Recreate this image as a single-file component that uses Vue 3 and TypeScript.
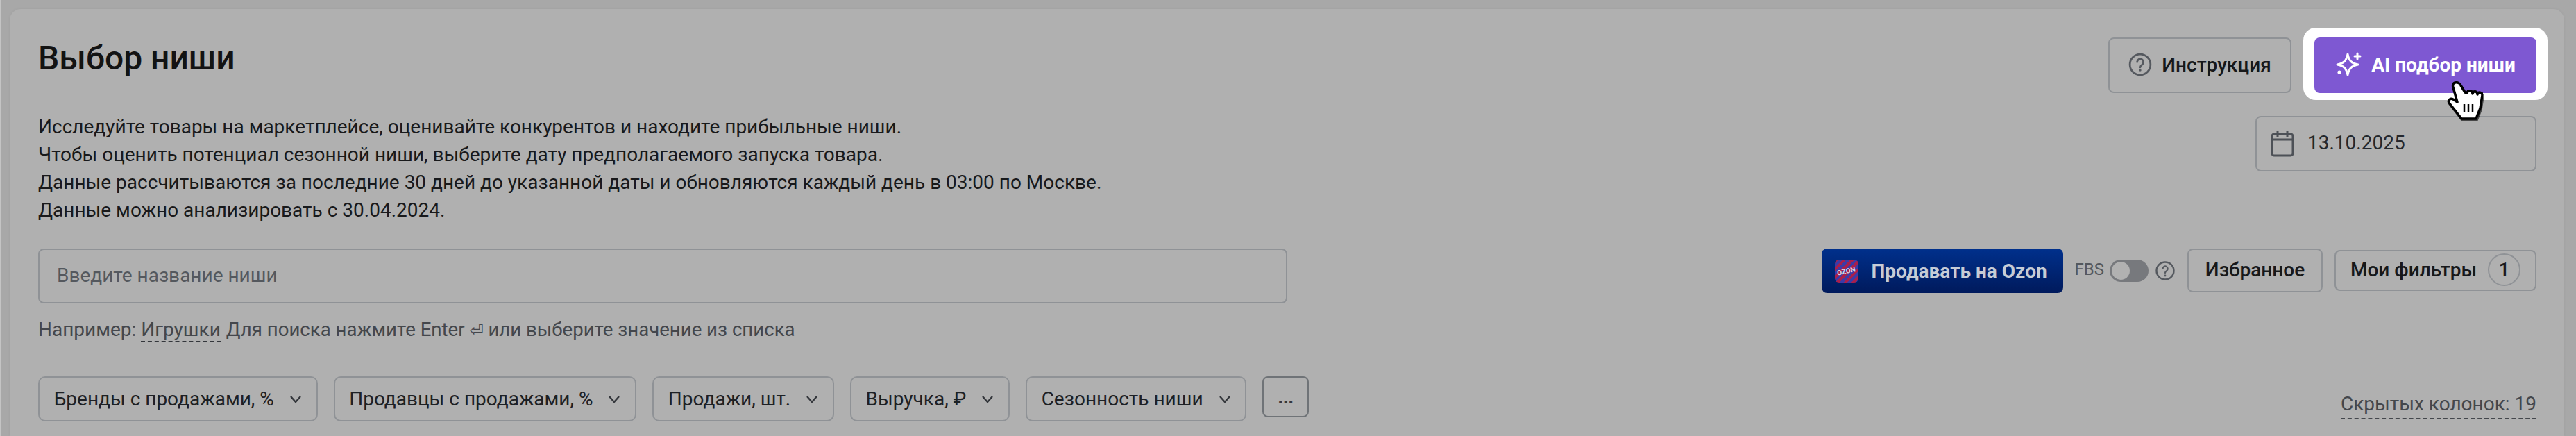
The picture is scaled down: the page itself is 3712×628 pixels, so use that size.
<template>
  <div class="page">
    <div class="card">
      <section class="top">
        <div class="intro">
          <h1>Выбор ниши</h1>
          <p v-for="line in introLines" :key="line">{{ line }}</p>
        </div>
        <div class="top-side">
          <div class="top-actions">
            <button class="btn help-btn">
              <svg class="help-icon" viewBox="0 0 32 32" fill="none">
                <circle cx="16" cy="16" r="14" stroke="#55595f" stroke-width="2.6" />
                <path d="M11.8 12.6a4.3 4.3 0 1 1 6.6 3.7c-1.5 1-2.4 1.7-2.4 3.4" stroke="#55595f" stroke-width="2.6" stroke-linecap="round" />
                <circle cx="16" cy="23.6" r="1.6" fill="#55595f" />
              </svg>
              Инструкция
            </button>
            <div class="ai-halo">
              <button class="ai-btn">
                <svg class="spark" viewBox="0 0 38 38" fill="none">
                  <path d="M18 4c1.800 9.500 5.500 13.200 15 15-9.500 1.800-13.200 5.500-15 15-1.800-9.500-5.500-13.200-15-15 9.500-1.800 13.200-5.500 15-15Z" stroke="#fff" stroke-width="3" stroke-linejoin="round" />
                  <path d="M32 3v8M28 7h8" stroke="#fff" stroke-width="3" stroke-linecap="round" />
                  <circle cx="6" cy="30" r="2.600" fill="#fff" />
                </svg>
                AI подбор ниши
              </button>
              <svg class="cursor" viewBox="0 0 52 58">
                <path d="M12 2C9 2 8 6 9 9l6 21-6-4c-4-2-8 1-6 5l15 19 3 4h21l6-15 3-19c0-5-6-5-7-1 0-5-6-6-7-1 0-5-7-6-8-1l-3-1-6-10c-1-3-5-5-8-4Z" fill="#fff" stroke="#000" stroke-width="3.500" stroke-linejoin="round" />
                <path d="M25 33v11M31 33v11M37 33v11" stroke="#000" stroke-width="2.500" />
              </svg>
            </div>
          </div>
          <div class="date-field">
            <svg class="cal" viewBox="0 0 34 40" fill="none">
              <rect x="2" y="7" width="30" height="31" rx="3" stroke="#4d5157" stroke-width="3" />
              <path d="M2 15h30M10 2v9M24 2v9" stroke="#4d5157" stroke-width="3" />
            </svg>
            <span>13.10.2025</span>
          </div>
        </div>
      </section>

      <section class="middle">
        <div class="search">
          <div class="search-input">Введите название ниши</div>
          <div class="hint">
            Например: <span class="dashed">Игрушки</span>
            <span class="hint-rest">Для поиска нажмите Enter <i>⏎</i> или выберите значение из списка</span>
          </div>
        </div>
        <div class="tools">
          <button class="ozon-btn">
            <span class="ozon-logo"><span>OZON</span></span>
            Продавать на Ozon
          </button>
          <span class="fbs">FBS</span>
          <span class="toggle"><span class="knob"></span></span>
          <svg class="fbs-help" viewBox="0 0 28 32" fill="none">
            <circle cx="14" cy="16" r="12.500" stroke="#54585e" stroke-width="2.400" />
            <path d="M10.500 13a3.600 3.600 0 1 1 5.500 3.100c-1.300.8-2 1.400-2 2.900" stroke="#54585e" stroke-width="2.200" stroke-linecap="round" />
            <circle cx="14" cy="23" r="1.400" fill="#54585e" />
          </svg>
          <button class="btn fav-btn">Избранное</button>
          <button class="btn my-btn">Мои фильтры <span class="badge">1</span></button>
        </div>
      </section>

      <section class="bottom">
        <div class="filters">
          <button v-for="f in filters" :key="f" class="chip">
            {{ f }}
            <svg viewBox="0 0 18 12" fill="none"><path d="M2 2l7 8 7-8" stroke="#33363b" stroke-width="2.400" /></svg>
          </button>
          <button class="more">...</button>
        </div>
        <span class="hidden-cols">Скрытых колонок: 19</span>
      </section>
    </div>
  </div>
</template>

<script setup lang="ts">
const introLines: string[] = [
  'Исследуйте товары на маркетплейсе, оценивайте конкурентов и находите прибыльные ниши.',
  'Чтобы оценить потенциал сезонной ниши, выберите дату предполагаемого запуска товара.',
  'Данные рассчитываются за последние 30 дней до указанной даты и обновляются каждый день в 03:00 по Москве.',
  'Данные можно анализировать с 30.04.2024.'
]

const filters: string[] = [
  'Бренды с продажами, %',
  'Продавцы с продажами, %',
  'Продажи, шт.',
  'Выручка, ₽',
  'Сезонность ниши'
]
</script>

<style>
html,
body {
  margin: 0;
  background: #a8a8a8;
}
</style>

<style scoped>
.page {
  width: 3712px;
  height: 628px;
  padding: 13px 17px 0 12px;
  box-sizing: border-box;
  overflow: hidden;
  border-left: 2px solid #c4c4c4;
  font-family: Roboto, "Liberation Sans", sans-serif;
  color: #1b1c1e;
}

.card {
  height: 615px;
  box-sizing: border-box;
  padding: 41px 40px 0 41px;
  background: #b0b0b0;
  border-radius: 16px 16px 0 0;
  box-shadow: 0 0 4px rgba(0, 0, 0, 0.06);
}

.top {
  display: flex;
  justify-content: space-between;
  height: 304px;
}

h1 {
  margin: 4px 0 53px;
  font-size: 48px;
  line-height: 52px;
  font-weight: 500;
  color: #131313;
}

.intro p {
  margin: 0;
  font-size: 28px;
  line-height: 40px;
  color: #18191b;
}

.top-side {
  display: flex;
  flex-direction: column;
  align-items: flex-end;
  gap: 33px;
}

.top-actions {
  display: flex;
  align-items: center;
  gap: 33px;
}

button {
  font-family: inherit;
  cursor: pointer;
}

.btn {
  display: flex;
  align-items: center;
  justify-content: center;
  box-sizing: border-box;
  padding: 0 0 2px;
  background: transparent;
  border: 2px solid #8f9296;
  border-radius: 8px;
  font-size: 28px;
  font-weight: 500;
  color: #17181a;
}

.help-btn {
  width: 264px;
  height: 80px;
  gap: 14px;
}

.help-icon {
  width: 34px;
  height: 34px;
}

.ai-halo {
  position: relative;
  padding: 14px 16px 10px;
  margin: -14px -16px -10px;
  background: #fff;
  border-radius: 18px;
}

.ai-btn {
  display: flex;
  align-items: center;
  justify-content: center;
  gap: 14px;
  width: 320px;
  height: 80px;
  padding: 0 0 2px;
  background: #7e58d2;
  border: none;
  border-radius: 8px;
  color: #fff;
  font-size: 28px;
  font-weight: 700;
}

.spark {
  width: 38px;
  height: 38px;
}

.cursor {
  position: absolute;
  left: 207px;
  top: 77px;
  width: 52px;
  height: 58px;
  z-index: 2;
  filter: drop-shadow(1px 2px 0 rgba(0, 0, 0, 0.6));
}

.date-field {
  display: flex;
  align-items: center;
  gap: 19px;
  box-sizing: border-box;
  width: 405px;
  height: 80px;
  padding: 0 0 3px 20px;
  border: 2px solid #8f9296;
  border-radius: 8px;
  font-size: 28px;
  color: #24272c;
}

.cal {
  width: 34px;
  height: 40px;
}

.middle {
  display: flex;
  justify-content: space-between;
  height: 184px;
}

.search {
  width: 1800px;
}

.search-input {
  display: flex;
  align-items: center;
  box-sizing: border-box;
  height: 79px;
  padding: 0 0 2px 25px;
  border: 2px solid #8f9296;
  border-radius: 8px;
  font-size: 28px;
  color: #54585e;
}

.hint {
  margin-top: 20px;
  font-size: 28px;
  line-height: 36px;
  color: #44474c;
  white-space: nowrap;
}

.hint-rest {
  margin-left: 8px;
  font-size: 27.6px;
}

.hint i {
  font-style: normal;
  font-family: "DejaVu Sans", sans-serif;
  font-size: 24px;
}

.dashed {
  border-bottom: 2px dashed #33363b;
}

.tools {
  display: flex;
  align-items: flex-start;
}

.ozon-btn {
  display: flex;
  align-items: center;
  gap: 19px;
  box-sizing: border-box;
  width: 348px;
  height: 64px;
  padding-left: 19px;
  border: none;
  border-radius: 8px;
  background: linear-gradient(#00308c, #001a5c);
  color: #c6ccd6;
  font-size: 28px;
  font-weight: 700;
}

.ozon-logo {
  display: flex;
  align-items: center;
  justify-content: center;
  width: 34px;
  height: 33px;
  border-radius: 6px;
  overflow: hidden;
  background: repeating-linear-gradient(135deg, #a81f4d 0 4px, #3f3aa6 4px 8px);
}

.ozon-logo span {
  font-size: 10px;
  font-weight: 700;
  color: #d8d8e4;
  transform: rotate(-12deg);
}

.fbs {
  margin: 14px 0 0 17px;
  font-size: 24px;
  line-height: 32px;
  color: #54585e;
}

.toggle {
  position: relative;
  box-sizing: border-box;
  width: 56px;
  height: 32px;
  margin: 16px 0 0 8px;
  background: #77797d;
  border-radius: 16px;
}

.knob {
  position: absolute;
  left: 3px;
  top: 3px;
  width: 26px;
  height: 26px;
  background: #b1b1b1;
  border-radius: 50%;
}

.fbs-help {
  width: 28px;
  height: 32px;
  margin: 16px 0 0 10px;
}

.fav-btn {
  width: 195px;
  height: 63px;
  margin-left: 18px;
}

.my-btn {
  width: 291px;
  height: 59px;
  margin: 2px 0 0 17px;
  gap: 16px;
}

.badge {
  display: flex;
  align-items: center;
  justify-content: center;
  width: 47px;
  height: 47px;
  box-sizing: border-box;
  border: 2px solid #8f9296;
  border-radius: 50%;
}

.bottom {
  display: flex;
  justify-content: space-between;
  align-items: flex-start;
}

.filters {
  display: flex;
  align-items: flex-start;
  gap: 23px;
}

.chip {
  display: flex;
  align-items: center;
  gap: 22px;
  height: 65px;
  padding: 0 20.7px;
  background: transparent;
  border: 2px solid #8f9296;
  border-radius: 10px;
  font-size: 28px;
  color: #1d2024;
  white-space: nowrap;
}

.chip svg {
  width: 18px;
  height: 12px;
}

.more {
  width: 67px;
  height: 59px;
  background: transparent;
  border: 2px solid #6f7377;
  border-radius: 8px;
  font-size: 26px;
  font-weight: 700;
  color: #33363b;
}

.hidden-cols {
  margin-top: 20px;
  font-size: 28px;
  line-height: 40px;
  color: #44474c;
  border-bottom: 2px dashed #44474c;
  white-space: nowrap;
}
</style>
